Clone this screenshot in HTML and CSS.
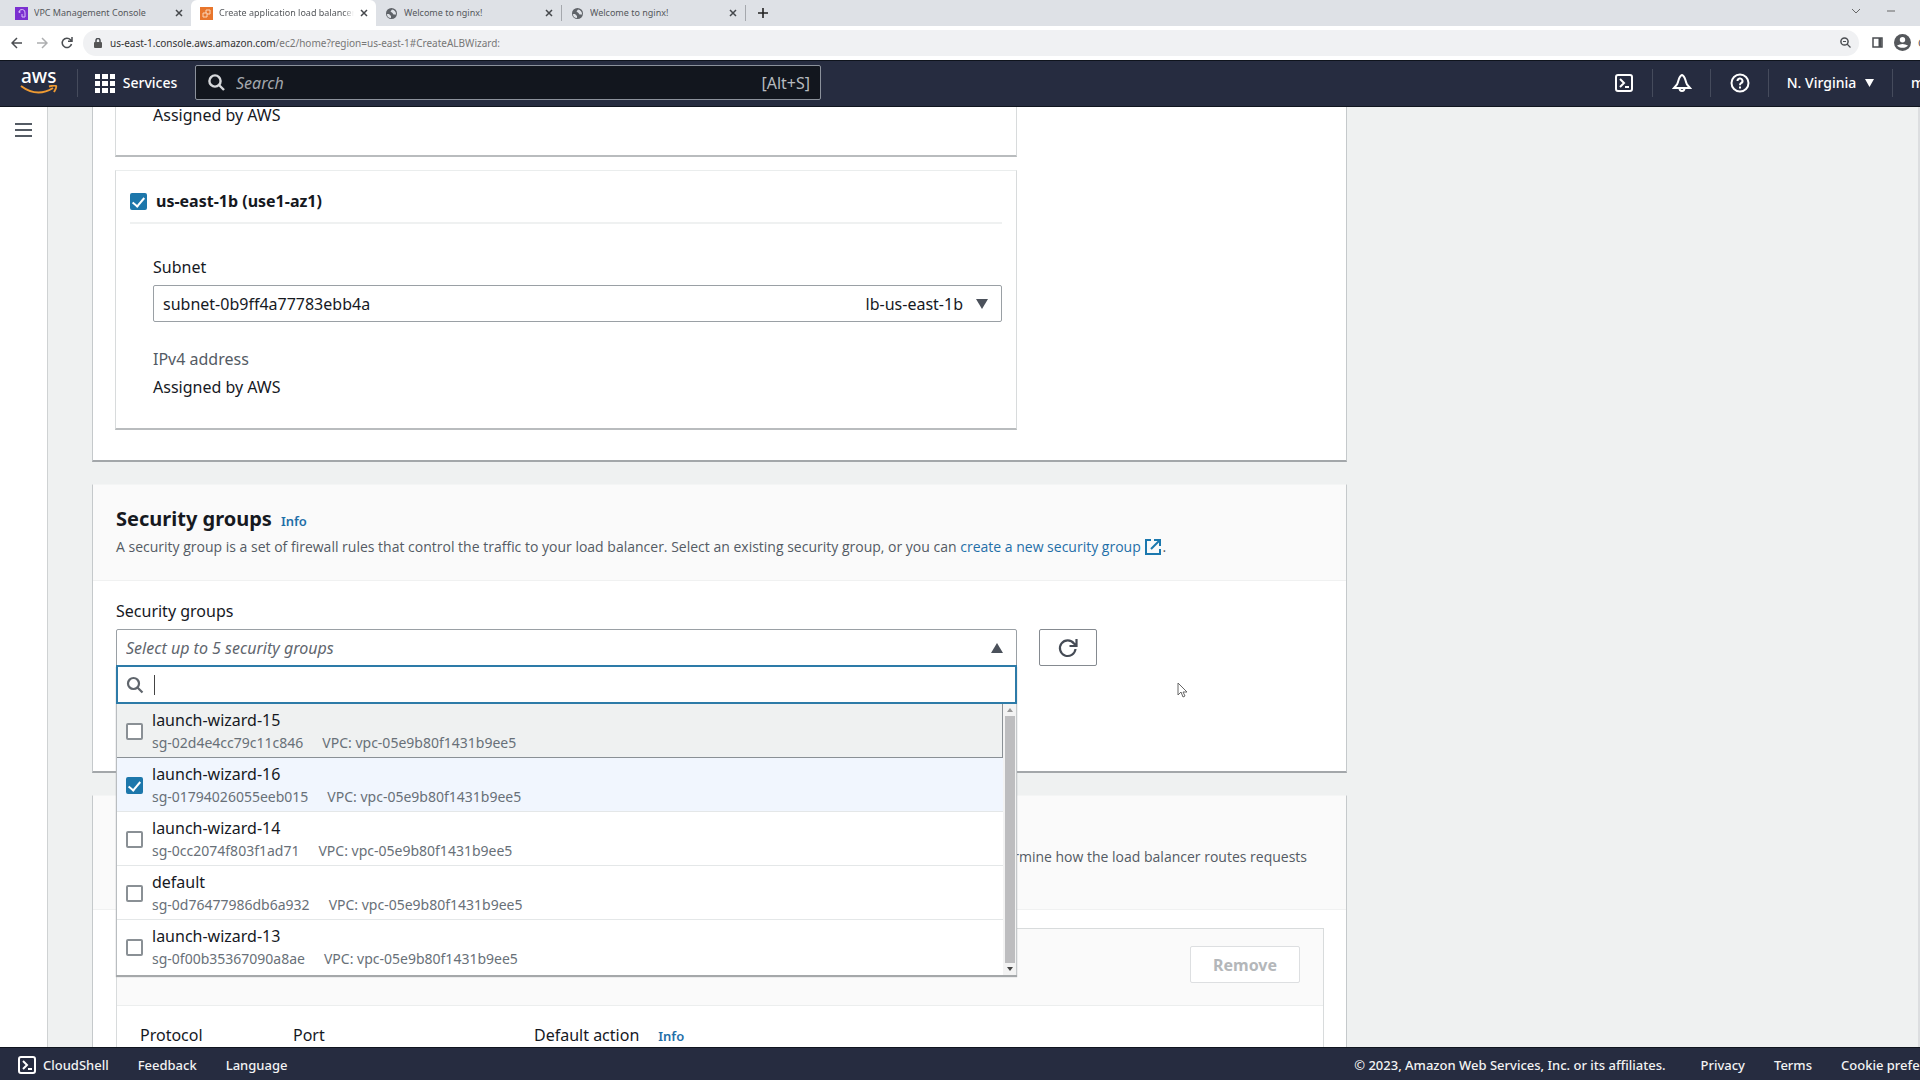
FILE: index.html
```html
<!DOCTYPE html>
<html lang="en">
<head>
<meta charset="utf-8">
<title>Create application load balancer</title>
<link rel="stylesheet" href="styles.css">
</head>
<body>
<div class="tabs">
  <div class="tab">
    <svg class="fav" viewBox="0 0 13 13"><rect width="13" height="13" fill="#7b2fd0"/><path d="M4 5a3 3 0 0 1 6 1v4H7V7" fill="none" stroke="#d9bdf8"/><circle cx="4.500" cy="5" r="1" fill="#d9bdf8"/></svg>
    <span class="tab-title">VPC Management Console</span><button class="close" aria-label="Close tab"><svg viewBox="0 0 8 8"><path d="M1 1l6 6M7 1L1 7"/></svg></button>
  </div>
  <div class="tab active">
    <svg class="fav" viewBox="0 0 13 13"><rect width="13" height="13" fill="#e8762c"/><path d="M3 6h4v4H3zM6 6V3h4v4H7" fill="none" stroke="#fbd5b8"/></svg>
    <span class="tab-title fade">Create application load balancer</span><button class="close" aria-label="Close tab"><svg viewBox="0 0 8 8"><path d="M1 1l6 6M7 1L1 7"/></svg></button>
  </div>
  <div class="tab">
    <svg class="fav" viewBox="0 0 13 13"><circle cx="6.500" cy="6.500" r="5.500" fill="#5f6368"/><path d="M2 7h2l2 2v2a4 4 0 0 1-4-4zM7 2.500l-1.500 2 2 1.500 1 1.500h2.500A4.500 4.500 0 0 0 7 2.500z" fill="#dee1e6"/></svg>
    <span class="tab-title">Welcome to nginx!</span><button class="close" aria-label="Close tab"><svg viewBox="0 0 8 8"><path d="M1 1l6 6M7 1L1 7"/></svg></button>
  </div>
  <div class="tab ruled">
    <svg class="fav" viewBox="0 0 13 13"><circle cx="6.500" cy="6.500" r="5.500" fill="#5f6368"/><path d="M2 7h2l2 2v2a4 4 0 0 1-4-4zM7 2.500l-1.500 2 2 1.500 1 1.500h2.500A4.500 4.500 0 0 0 7 2.500z" fill="#dee1e6"/></svg>
    <span class="tab-title">Welcome to nginx!</span><button class="close" aria-label="Close tab"><svg viewBox="0 0 8 8"><path d="M1 1l6 6M7 1L1 7"/></svg></button>
  </div>
  <button class="new-tab" aria-label="New tab"><svg viewBox="0 0 10 10"><path d="M5 0v10M0 5h10"/></svg></button>
  <div class="window-tools">
    <svg width="8" height="6" viewBox="0 0 8 6"><path d="M0 1l4 4 4-4"/></svg>
    <svg width="8" height="6" viewBox="0 0 8 6"><path d="M0 3h8"/></svg>
  </div>
</div>
<div class="toolbar">
  <button aria-label="Back"><svg width="12" height="12" viewBox="0 0 12 12"><path d="M11 6H1M6 1L1 6l5 5"/></svg></button>
  <button class="dim" aria-label="Forward"><svg width="12" height="12" viewBox="0 0 12 12"><path d="M1 6h10M6 1l5 5-5 5"/></svg></button>
  <button aria-label="Reload"><svg width="12" height="12" viewBox="0 0 12 12"><path d="M10.500 7A4.700 4.700 0 1 1 9.500 2.800L11 4M11 0v4.200H7"/></svg></button>
  <div class="address">
    <svg width="8" height="10" viewBox="0 0 8 10"><rect y="4" width="8" height="6" rx="1" fill="#555" stroke="none"/><path d="M2 4V2.500a2 2 0 0 1 4 0V4"/></svg>
    <span class="url">us-east-1.console.aws.amazon.com<span class="path">/ec2/home?region=us-east-1#CreateALBWizard:</span></span>
    <svg class="mag" width="11" height="11" viewBox="0 0 11 11"><circle cx="4.500" cy="4.500" r="3.600"/><path d="M7 7l3.500 3.500M3 4.500h3" stroke-width="1.200"/></svg>
  </div>
  <svg class="panel-icon" width="11" height="11" viewBox="0 0 11 11"><rect x="1" y="1" width="9" height="9"/><path d="M8 1v9" stroke-width="3"/></svg>
  <div class="profile">
    <svg width="17" height="17" viewBox="0 0 17 17"><circle cx="8.500" cy="8.500" r="8.500" fill="#55585c" stroke="none"/><circle cx="8.500" cy="5.700" r="2.700" fill="#fff" stroke="none"/><path d="M3 11.500q5.500-3 11 0a6.500 5 0 0 1-11 0z" fill="#fff" stroke="none"/></svg>
    <span>G</span>
  </div>
</div>
<header class="nav">
  <a class="logo" href="#" aria-label="AWS home"><span>aws</span><svg width="38" height="10" viewBox="0 0 38 10"><path d="M1 1q16 12 32 2" fill="none" stroke="#ee9a32" stroke-width="2"/><path d="M29 1.500q6-1.500 7-.5t-2 6" fill="none" stroke="#ee9a32" stroke-width="2"/></svg></a>
  <button class="services"><svg width="20" height="20" viewBox="0 0 20 20"><path fill="#fff" d="M0 1h5v5H0zM7 1h6v5H7zM15 1h5v5h-5zM0 8h5v5H0zM7 8h6v5H7zM15 8h5v5h-5zM0 15h5v5H0zM7 15h6v5H7zM15 15h5v5h-5z"/></svg>Services</button>
  <label class="search"><svg width="17" height="17" viewBox="0 0 17 17"><circle cx="7" cy="7" r="5.600"/><path d="M11 11l5 5"/></svg><input type="search" placeholder="Search" aria-label="Search"><kbd>[Alt+S]</kbd></label>
  <div class="nav-right">
    <button aria-label="CloudShell"><svg width="20" height="20" viewBox="0 0 20 20"><rect x="2" y="2" width="16" height="16" rx="2"/><path d="M6 6l4 4-4 4M11 14h4"/></svg></button>
    <button aria-label="Notifications"><svg width="20" height="20" viewBox="0 0 20 20"><path d="M10 2C6.500 3 7 8 5 11.500L2 15h16l-3-3.500C13 8 13.500 3 10 2zM7.500 15a2.500 3 0 0 0 5 0"/></svg></button>
    <button aria-label="Help"><svg width="20" height="20" viewBox="0 0 20 20"><circle cx="10" cy="10" r="8.500"/><path d="M7.500 8a2.500 2.500 0 1 1 3.500 2.200q-1 .6-1 2M10 13.500v2"/></svg></button>
    <button class="region">N. Virginia<svg width="9" height="8" viewBox="0 0 9 8"><path d="M0 0h9L4.500 8z" fill="#fff" stroke="none"/></svg></button>
    <button class="account">m</button>
  </div>
</header>
<div class="body">
  <aside class="side"><button aria-label="Open menu"><svg width="17" height="16" viewBox="0 0 17 16"><path d="M0 2h17M0 8h17M0 14h17"/></svg></button></aside>
  <main class="main">
    <section class="panel mapping">
      <div class="zone cut"><p class="value">Assigned by AWS</p></div>
      <div class="zone">
        <div class="zone-head"><input type="checkbox" id="az" checked><label for="az">us-east-1b (use1-az1)</label></div>
        <div class="zone-body">
          <label for="subnet">Subnet</label>
          <div class="select"><select id="subnet"><option>subnet-0b9ff4a77783ebb4a</option></select><span class="tag">lb-us-east-1b</span><svg class="arrow" width="12" height="10" viewBox="0 0 12 10"><path d="M0 0h12L6 10z"/></svg></div>
          <p class="key">IPv4 address</p>
          <p class="value">Assigned by AWS</p>
        </div>
      </div>
    </section>
    <section class="panel groups">
      <div class="panel-head">
        <div class="title"><h2>Security groups</h2><a class="info" href="#">Info</a></div>
        <p class="desc">A security group is a set of firewall rules that control the traffic to your load balancer. Select an existing security group, or you can <a href="#">create a new security group <svg width="18" height="18" viewBox="0 0 18 18"><path d="M7 2H2v14h14v-5M10 2h6v6M16 2L7 11"/></svg></a>.</p>
      </div>
      <div class="panel-body">
        <label for="sg">Security groups</label>
        <div class="field-row">
          <div class="picker">
            <div class="select open"><select id="sg"><option>Select up to 5 security groups</option></select><svg class="arrow" width="12" height="10" viewBox="0 0 12 10"><path d="M0 10h12L6 0z"/></svg></div>
            <div class="menu">
              <div class="filter"><svg width="18" height="18" viewBox="0 0 18 18"><circle cx="7.500" cy="7.500" r="5.500"/><path d="M11.500 11.500l5 5"/></svg><span class="caret"></span><input type="text" aria-label="Filter security groups"></div>
              <div class="list">
                <div class="options">
                  <label class="option hover"><input type="checkbox"><span class="name">launch-wizard-15</span><span class="meta"><span>sg-02d4e4cc79c11c846</span><span>VPC: vpc-05e9b80f1431b9ee5</span></span></label>
                  <label class="option picked"><input type="checkbox" checked><span class="name">launch-wizard-16</span><span class="meta"><span>sg-01794026055eeb015</span><span>VPC: vpc-05e9b80f1431b9ee5</span></span></label>
                  <label class="option"><input type="checkbox"><span class="name">launch-wizard-14</span><span class="meta"><span>sg-0cc2074f803f1ad71</span><span>VPC: vpc-05e9b80f1431b9ee5</span></span></label>
                  <label class="option"><input type="checkbox"><span class="name">default</span><span class="meta"><span>sg-0d76477986db6a932</span><span>VPC: vpc-05e9b80f1431b9ee5</span></span></label>
                  <label class="option"><input type="checkbox"><span class="name">launch-wizard-13</span><span class="meta"><span>sg-0f00b35367090a8ae</span><span>VPC: vpc-05e9b80f1431b9ee5</span></span></label>
                </div>
                <div class="scroll"><svg width="6" height="4" viewBox="0 0 6 4"><path d="M0 4h6L3 0z" fill="#999"/></svg><span class="thumb"></span><svg width="6" height="4" viewBox="0 0 6 4"><path d="M0 0h6L3 4z" fill="#444"/></svg></div>
              </div>
            </div>
          </div>
          <button class="refresh" aria-label="Refresh"><svg width="22" height="22" viewBox="0 0 22 22"><path d="M18.500 12A7.800 7.800 0 1 1 17 6.500L19 8.500M19.500 2v7h-7"/></svg></button>
        </div>
      </div>
    </section>
    <section class="panel listeners">
      <div class="panel-head"><p class="desc">determine how the load balancer routes requests</p></div>
      <div class="panel-body">
        <div class="listener">
          <div class="listener-head"><button class="remove" disabled>Remove</button></div>
          <div class="listener-cols"><span>Protocol</span><span>Port</span><span class="action">Default action <a class="info" href="#">Info</a></span></div>
        </div>
      </div>
    </section>
  </main>
  <svg class="pointer" width="10" height="16" viewBox="0 0 10 16"><path d="M1 1v12l3-3 2 5 2-1-2-4h4z" fill="#fff" stroke="#666"/></svg>
</div>
<footer class="foot">
  <button class="shell"><svg width="20" height="20" viewBox="0 0 20 20"><rect x="2" y="2" width="16" height="16" rx="2"/><path d="M6 6l4 4-4 4M11 14h4"/></svg>CloudShell</button>
  <a href="#">Feedback</a><a href="#">Language</a>
  <span class="copy">© 2023, Amazon Web Services, Inc. or its affiliates.</span>
  <a href="#">Privacy</a><a href="#">Terms</a><a class="cookie" href="#">Cookie preferences</a>
</footer>
</body>
</html>
```
FILE: styles.css
```css
* { box-sizing: border-box; }
body { margin: 0; height: 100vh; display: flex; flex-direction: column; overflow: hidden; font: 16px/22px "Noto Sans", sans-serif; color: #16191f; }
button { border: 0; padding: 0; background: none; color: inherit; font: inherit; display: flex; align-items: center; justify-content: center; }
h2, p { margin: 0; }
a { color: #1f6fa8; text-decoration: none; }
svg { flex: none; }

.tabs { flex: none; height: 26px; background: #dee1e6; display: flex; font: 9px/14px "Noto Sans", sans-serif; color: #55585c; }
.tab { width: 185px; display: flex; align-items: center; padding: 0 8px 0 15px; gap: 6px; }
.tab.active { background: #fff; border-radius: 6px 6px 0 0; padding-left: 9px; }
.tab:first-child { width: 191px; }
.tab.ruled { border-left: 1px solid #a5a8ad; border-right: 1px solid #a5a8ad; height: 16px; margin-top: 5px; padding-left: 9px; }
.tab:nth-child(3) { padding-left: 9px; }
.fav { width: 13px; height: 13px; }
.tab-title { flex: 1; min-width: 0; white-space: nowrap; overflow: hidden; }
.fade { mask-image: linear-gradient(90deg, #000 92%, transparent); }
.close svg { width: 8px; height: 8px; stroke: #45484c; stroke-width: 1.5; }
.new-tab { width: 34px; }
.new-tab svg { width: 10px; height: 10px; stroke: #222; stroke-width: 1.6; }
.window-tools { margin-left: auto; padding: 8px 25px 0 0; display: flex; gap: 27px; }
.window-tools svg { fill: none; stroke: #666; }

.toolbar { flex: none; height: 34px; background: #fff; display: flex; align-items: center; padding: 0 0 1px 11px; gap: 13px; }
.toolbar svg { fill: none; stroke: #4b4e52; stroke-width: 1.5; }
.toolbar .dim { opacity: .45; }
.address { flex: 1; height: 26px; border-radius: 13px; background: #f0f1f3; display: flex; align-items: center; gap: 8px; padding: 0 8px 0 11px; margin-left: -3px; font: 10px/14px "Noto Sans", sans-serif; color: #333; }
.path { color: #777; }
.mag { margin-left: auto; }
.panel-icon { margin-right: -2px; }
.profile { width: 26px; overflow: hidden; display: flex; align-items: center; gap: 7px; color: #555; font-size: 11px; }

.nav { flex: none; height: 47px; background: #262c40; border-top: 1px solid #0f141d; border-bottom: 1px solid #10151f; padding-bottom: 2px; display: flex; align-items: center; color: #fff; font-size: 14px; }
.logo { width: 78px; height: 28px; border-right: 1px solid #454b5c; padding-left: 20px; color: #fff; display: flex; flex-direction: column; }
.logo span { font-size: 19px; line-height: 14px; font-weight: 500; padding: 0 1px 2px; }
.services { width: 117px; gap: 8px; padding-right: 1px; font-weight: 500; }
.search { width: 626px; height: 35px; border: 1px solid #8b919b; border-radius: 2px; background: #12161e; display: flex; align-items: center; gap: 11px; padding: 0 10px 0 12px; color: #b6babf; }
.search svg { fill: none; stroke: #d6d8db; stroke-width: 2.4; }
.search input { flex: 1; min-width: 0; border: 0; padding: 0; background: none; font: italic 16px/22px "Noto Sans", sans-serif; color: #fff; outline: 0; }
.search input::placeholder { color: #a3a7ad; }
.search kbd { font: 16px/22px "Noto Sans", sans-serif; }
.nav-right { margin-left: auto; display: flex; height: 28px; }
.nav-right button { width: 58px; border-right: 1px solid #454b5c; flex: none; }
.nav-right svg { fill: none; stroke: #fff; stroke-width: 2; }
.nav-right .region { width: 124px; gap: 9px; font-weight: 500; }
.nav-right .account { width: 27px; border: 0; padding-left: 18px; justify-content: flex-start; overflow: hidden; font-weight: 500; }

.body { flex: 1; min-height: 0; display: flex; overflow: hidden; position: relative; background: #eff1f1; border-right: 2px solid #dcdee0; }
.side { width: 48px; flex: none; background: #fff; border-right: 1px solid #cfd2d3; padding: 15px 0 0 15px; }
.side svg { stroke: #545b64; stroke-width: 2; }
.main { flex: 1; min-width: 0; padding-left: 44px; }
.panel { max-width: 1255px; background: #fff; border: 1px solid #c5c9cb; border-top-color: #f4f5f5; border-bottom: 2px solid #a3a7aa; margin-bottom: 22px; }
.mapping { border-top: 0; padding: 0 22px 30px; }
.zone { max-width: 902px; border: 1px solid #d8dbdc; border-top-color: #eaeded; border-bottom: 2px solid #b9bcbe; padding: 11px 14px 0 14px; margin-top: 13px; height: 260px; }
.zone.cut { height: 50px; margin: 0; border-top: 0; padding: 0 0 0 37px; }
.zone.cut .value { line-height: 16px; }
.zone-head { height: 42px; border-bottom: 2px solid #eff1f1; display: flex; align-items: center; gap: 9px; font-weight: 700; padding-bottom: 2px; }
.zone-body { padding: 32px 0 0 23px; display: flex; flex-direction: column; }
.zone-body label { line-height: 22px; margin-bottom: 7px; }
.key { color: #545b64; margin-top: 26px; }
.value { margin-top: 6px; }
.cut .value { margin-top: 0; }
input[type="checkbox"] { appearance: none; margin: 0; width: 17px; height: 17px; flex: none; border: 2px solid #8a9095; border-radius: 2px; background: #fff; display: grid; place-items: center; }
input[type="checkbox"]:checked { background: #1d77ab; border-color: #1d77ab; }
input[type="checkbox"]:checked::after { content: ""; width: 5px; height: 10px; border: solid #fff; border-width: 0 2px 2px 0; transform: rotate(40deg); margin-bottom: 3px; }
.select { display: grid; grid-template-columns: minmax(0, 1fr) auto auto; align-items: center; column-gap: 13px; padding-right: 13px; height: 37px; border: 1px solid #9aa0a5; border-radius: 2px; background: #fff; }
.select select { grid-area: 1 / 1 / 2 / 4; appearance: none; border: 0; background: none; font: inherit; color: inherit; padding: 0 0 0 9px; height: 35px; width: 100%; }
.tag { grid-area: 1 / 2; }
.arrow { grid-area: 1 / 3; fill: #4b515b; }
.panel-head { background: #fafafa; border-bottom: 1px solid #f0f1f1; padding: 20px 22px 0; height: 96px; }
.title { display: flex; align-items: baseline; gap: 9px; }
h2 { font-size: 20px; line-height: 28px; font-weight: 700; }
.info { font-size: 13px; font-weight: 600; }
.desc { font: 14px/22px "Open Sans", sans-serif; color: #545b64; margin-top: 3px; white-space: nowrap; }
.desc svg { fill: none; stroke: #1b78ae; stroke-width: 2; vertical-align: -4px; }
.panel-body { padding: 19px 22px 0 23px; }
.panel-body > label { display: block; margin-bottom: 7px; }
.groups { height: 289px; }
.groups .panel-head { padding-left: 23px; }
.field-row { display: flex; gap: 22px; }
.picker { flex: 1; max-width: 901px; position: relative; }
.select.open { font-style: italic; color: #5f666e; border-radius: 2px 2px 0 0; }
.refresh { width: 58px; height: 37px; border: 1px solid #858a90; border-radius: 2px; }
.refresh svg { fill: none; stroke: #454b55; stroke-width: 2.2; }
.menu { position: absolute; z-index: 2; left: 0; right: 0; top: 36px; background: #fff; box-shadow: 0 2px 1px #a5a8aa; }
.filter { height: 39px; border: 2px solid #2d7ba8; display: flex; align-items: center; padding: 0 8px; }
.filter svg { fill: none; stroke: #5f656c; stroke-width: 2.2; }
.caret { width: 1px; height: 20px; background: #444; margin-left: 10px; }
.filter input { flex: 1; border: 0; outline: 0; font: inherit; height: 30px; }
.list { display: flex; border-left: 1px solid #b9bdc0; border-right: 1px solid #c5c9cb; height: 271px; }
.options { flex: 1; }
.option { display: grid; grid-template-columns: 17px 1fr; column-gap: 9px; height: 54px; padding: 5px 9px 0; border-bottom: 1px solid #e4e7e8; align-content: start; align-items: center; }
.option:last-child { border: 0; }
.option input { grid-row: 1 / 3; }
.option.hover { background: #eff1f1; border-right: 1px solid #8a9095; border-bottom-color: #8a9095; }
.option.picked { background: #f1f6fe; }
.name { line-height: 23px; }
.meta { font-size: 14px; line-height: 21px; color: #687078; display: flex; gap: 19px; }
.scroll { width: 13px; background: #f3f3f3; display: flex; flex-direction: column; align-items: center; padding: 4px 0; gap: 4px; }
.thumb { flex: 1; width: 10px; background: #bdbdbf; }
.listeners { height: 300px; margin-bottom: 0; }
.listeners .panel-head { height: 114px; padding: 50px 39px 0; text-align: right; }
.listeners .desc { margin: 0; }
.listener { border: 1px solid #d8dbdc; }
.listener-head { height: 77px; background: #fafafa; border-bottom: 1px solid #eceeee; padding: 17px 23px; display: flex; justify-content: flex-end; }
.remove { width: 110px; height: 37px; border: 1px solid #dddfe1; border-radius: 2px; background: #fff; color: #b4b7ba; font-weight: 700; }
.listener-cols { display: grid; grid-template-columns: 153px 241px 1fr; padding: 18px 23px; }
.listeners .panel-body { padding-top: 18px; }
.action { display: flex; align-items: baseline; gap: 19px; }
.pointer { position: absolute; left: 1177px; top: 575px; }

.foot { flex: none; height: 33px; background: #262c40; border-top: 1px solid #10151f; color: #f2f3f3; font-size: 13px; font-weight: 500; display: flex; align-items: center; gap: 29px; padding: 1px 0 0 17px; overflow: hidden; white-space: nowrap; }
.foot a { color: inherit; }
.foot svg { fill: none; stroke: #fff; stroke-width: 2; }
.shell { gap: 6px; }
.copy { margin-left: auto; margin-right: 6px; }
.cookie { width: 79px; overflow: hidden; }
```
